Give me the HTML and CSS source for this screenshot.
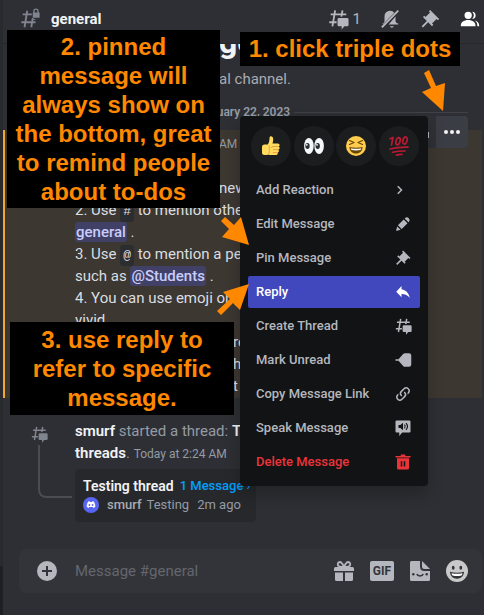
FILE: index.html
```html
<!DOCTYPE html>
<html lang="en">
<head>
<meta charset="utf-8">
<meta name="viewport" content="width=device-width, initial-scale=1">
<title>general</title>
<link rel="stylesheet" href="styles.css">
</head>
<body>
<svg class="defs" aria-hidden="true">
  <symbol id="pin" viewBox="0 0 24 24"><path fill="currentColor" d="M22 12 12.1 2.1l-1.4 1.4 1.4 1.4-4.95 4.95-1.4-1.4L4.3 9.9l4.25 4.2-5.65 5.7 1.4 1.4L10 15.5l4.2 4.3 1.4-1.4-1.4-1.45L19.2 12l1.4 1.4z"/></symbol>
  <symbol id="thread" viewBox="0 0 24 24"><path fill="none" stroke="currentColor" stroke-width="2" d="M8.9 2.5 5.9 20M16.9 2.5l-1.2 7M4 7h17M2.5 15.5h8"/><path fill="currentColor" d="M13 11h9a1.5 1.5 0 0 1 1.500 1.500v6a1.500 1.500 0 0 1-1.500 1.500h-3l-3 3.500V20h-3a1.500 1.500 0 0 1-1.500-1.500v-6A1.500 1.500 0 0 1 13 11z"/></symbol>
</svg>

<div class="app">
  <aside class="rail"><div class="rail-top"></div></aside>
  <main class="channel">
    <header class="topbar">
      <svg class="icon-22 hash" viewBox="0 0 24 24"><path fill="none" stroke="currentColor" stroke-width="2" d="M9 3 6 21M15 11l-1.600 10M4 7h10M18 15.500H2.500M17 12l-.2 1"/><path fill="currentColor" d="M21.500 5V3.500a3 3 0 0 0-6 0V5H15v5.500h7.500V5zM17 5V3.500a1.500 1.500 0 0 1 3 0V5z"/></svg>
      <h1 class="title">general</h1>
      <nav class="tools">
        <button class="tool" aria-label="Threads"><svg class="icon-22"><use href="#thread"/></svg><span class="count">1</span></button>
        <button class="tool" aria-label="Notifications"><svg class="icon-22" viewBox="0 0 24 24"><path fill="currentColor" d="M18 9v5c0 1.700 1.300 3 3 3v1H10.500L18.200 9zM11.800 20h4.400a2.300 2.300 0 0 1-4.400 0zM12 3a6 6 0 0 1 4.700 2.200L5 17.100H3.500V17c1.600 0 2.500-1.300 2.500-3V9a6 6 0 0 1 6-6z"/><path stroke="currentColor" stroke-width="2" d="M21 2.800 3.200 21"/></svg></button>
        <button class="tool" aria-label="Pinned Messages"><svg class="icon-22"><use href="#pin"/></svg></button>
        <button class="tool active" aria-label="Members"><svg class="icon-22" viewBox="0 0 24 24"><path fill="currentColor" d="M14 8a4 4 0 1 1-8 0 4 4 0 0 1 8 0zM2 19c0-3.500 3.300-6 8-6s8 2.500 8 6v1H2zM20 20h2v-1c0-2.600-1.700-4.600-4.500-5.500A7.400 7.400 0 0 1 20 19zM14.900 11.900A4 4 0 0 0 14.500 4a6 6 0 0 1 .1 7.800z"/></svg></button>
      </nav>
    </header>

    <section class="chat">
      <div class="intro">
        <h2>ge</h2>
        <p>al channel.</p>
      </div>
      <div class="divider"><span>January 22, 2023</span></div>

      <article class="message mention">
        <div class="inset"><time>AM</time></div>
        <p class="inset line-gap">new</p>
        <p>2. Use <code>#</code> to mention othe</p>
        <p><a class="tag" href="#">general</a> .</p>
        <p>3. Use <code>@</code> to mention a pe</p>
        <p>such as <a class="tag" href="#">@Students</a> .</p>
        <p>4. You can use emoji or g</p>
        <p>vivid.</p>
        <p class="inset-far">re</p>
        <p class="inset-far">h</p>
        <p class="inset-far">t</p>
      </article>

      <article class="message system">
        <div class="gutter">
          <svg class="icon-18"><use href="#thread"/></svg>
          <span class="spine"></span>
        </div>
        <div class="body">
          <p><b>smurf</b> started a thread: <b>T</b></p>
          <p><b>threads</b>. <time>Today at 2:24 AM</time></p>
          <div class="thread-card">
            <div class="thread-title"><b>Testing thread</b><a href="#">1 Message ›</a></div>
            <div class="thread-last">
              <svg class="avatar" viewBox="0 0 16 16"><circle cx="8" cy="8" r="8" fill="#5865f2"/><path fill="#fff" d="M5.200 4.600 6.600 4.200l.4.700h2l.4-.7 1.400.4c1 1.500 1.600 3.100 1.500 5.200-.6.600-1.300.9-2 1.100l-.5-.9H6.200l-.5.9c-.7-.2-1.400-.5-2-1.100-.1-2.100.5-3.700 1.500-5.200z"/><circle cx="6.400" cy="8" r=".9" fill="#5865f2"/><circle cx="9.600" cy="8" r=".9" fill="#5865f2"/></svg>
              <span class="who">smurf</span><span>Testing</span><span class="ago">2m ago</span>
            </div>
          </div>
        </div>
      </article>
    </section>

    <form class="composer">
      <button type="button" aria-label="Add attachment"><svg class="icon-20" viewBox="0 0 20 20"><circle cx="10" cy="10" r="10" fill="currentColor"/><path stroke="#333439" stroke-width="2" d="M10 5v10M5 10h10"/></svg></button>
      <input type="text" aria-label="Message" placeholder="Message #general">
      <button type="button" aria-label="Send a gift"><svg class="icon-20" viewBox="0 0 20 20"><path fill="currentColor" d="M0 7.500Q0 6 1.500 6h17Q20 6 20 7.500V10H0zM1 11.500h8V20H2.500Q1 20 1 18.500zM11 11.500h8v7q0 1.500-1.500 1.500H11z"/><path fill="none" stroke="currentColor" stroke-width="1.800" d="M10 6C8.500 2.500 7.500 1 5.800 1a2.200 2.200 0 0 0-.8 4.200C6.500 6 8 6 10 6c2 0 3.500 0 5-.8A2.200 2.200 0 0 0 14.200 1C12.500 1 11.500 2.500 10 6z"/></svg></button>
      <button type="button" class="gif">GIF</button>
      <button type="button" aria-label="Stickers"><svg class="icon-20" viewBox="0 0 20 20"><path fill="currentColor" d="M1.500 0H10v5.500Q10 10 14.500 10H20v8.500q0 1.500-1.500 1.500h-17Q0 20 0 18.500v-17Q0 0 1.500 0z"/><path fill="currentColor" d="M12 0 20 8h-5.500Q12 8 12 5.500z"/><g fill="#333439"><circle cx="3.300" cy="13.300" r="1.200"/><circle cx="16.700" cy="13.300" r="1.200"/></g><path fill="none" stroke="#333439" stroke-width="1.500" d="M6.800 13c.8 2.600 5.600 2.600 6.400 0"/></svg></button>
      <button type="button" class="smile" aria-label="Emoji"><svg class="icon-22" viewBox="0 0 22 22"><circle cx="11" cy="11" r="11" fill="currentColor"/><g fill="#333439"><ellipse cx="7.200" cy="7.800" rx="1.400" ry="2"/><ellipse cx="14.800" cy="7.800" rx="1.400" ry="2"/><path d="M4 11.800q7 1.700 14 0c-.2 4.700-3.400 6.900-7 6.900s-6.800-2.200-7-6.900z"/></g><path fill="#fff" d="M5.500 13.300q5.500 1.100 11 0-.3 1.700-1 2.200-4.500 1-9 0-.7-.5-1-2.200z"/></svg></button>
    </form>
  </main>
</div>

<div class="hover-bar">
  <button class="partial" aria-label="Reply"><svg viewBox="0 0 4 8"><path fill="currentColor" d="M0 1h3v6H0z"/></svg></button>
  <button class="more" aria-label="More"><svg viewBox="0 0 18 6"><g fill="currentColor"><circle cx="3" cy="3" r="2"/><circle cx="9" cy="3" r="2"/><circle cx="15" cy="3" r="2"/></g></svg></button>
</div>

<div class="menu">
  <div class="reactions">
    <button aria-label="Thumbs up"><svg viewBox="0 0 20 20"><path fill="#ffdb5e" d="M6 9C8 8 8.500 4.500 8.500 2c0-2.600 3.700-2.300 3.700 1 0 1.800-.3 3.300-.7 4.500h5.200c2.200 0 2.500 2.600.8 3 1.700.7 1.500 2.800-.3 3.200 1.200.8.8 2.600-.7 2.900.8 1-.1 2.400-1.500 2.400H8.500L6 18z"/><rect x="1" y="8.500" width="7" height="10.500" rx="2.500" fill="#ffdb5e"/><path fill="none" stroke="#ee9547" stroke-width=".9" d="M17.500 10.500h-5.500q-1.500 0-1.500 1.500M17 13.700h-5M16.300 16.600h-4.500M8 9.500c.5 2 .5 6 0 8.500"/></svg></button>
    <button aria-label="Eyes"><svg viewBox="0 0 20 20"><g fill="#f5f8fa"><ellipse cx="4.900" cy="10" rx="4.800" ry="8"/><ellipse cx="15.100" cy="10" rx="4.800" ry="8"/></g><g fill="#292f33"><ellipse cx="3.500" cy="10" rx="2.200" ry="3"/><ellipse cx="13.700" cy="10" rx="2.200" ry="3"/></g><g fill="#fff"><circle cx="2.800" cy="8.800" r=".9"/><circle cx="13" cy="8.800" r=".9"/></g></svg></button>
    <button aria-label="Laughing"><svg viewBox="0 0 20 20"><circle cx="10" cy="10" r="10" fill="#ffcc4d"/><path fill="#664500" d="M3.500 11q6.500 1.500 13 0c0 4-2.700 6.500-6.500 6.500S3.500 15 3.500 11z"/><path fill="#fff" d="M4.700 12.200q5.300 1.100 10.600 0-.2 1.200-.9 1.900-4.400.9-8.800 0-.7-.7-.9-1.900z"/><path fill="none" stroke="#664500" stroke-width="1.200" stroke-linecap="round" stroke-linejoin="round" d="m3.500 4.500 4.500 2-4.500 2M16.500 4.500 12 6.500l4.500 2"/></svg></button>
    <button aria-label="Hundred"><svg viewBox="0 0 20 20"><g fill="none" stroke="#bb1a34" stroke-width="1.700" stroke-linecap="round" stroke-linejoin="round"><path d="M1.200 2.800 4 1.500 2.500 9M1 13q8-2.200 18-1.900M3.500 16.300q5-1.300 12.500-1.300M7.500 19.100q3-.9 5.500-.8"/><ellipse cx="9" cy="5.200" rx="2" ry="3.700" transform="rotate(16 9 5.200)"/><ellipse cx="16" cy="4.500" rx="2" ry="3.700" transform="rotate(16 16 4.500)"/></g></svg></button>
  </div>
  <button class="item">Add Reaction<svg class="icon-18" viewBox="0 0 24 24"><path fill="none" stroke="currentColor" stroke-width="2" d="m5 7 5 5-5 5"/></svg></button>
  <button class="item">Edit Message<svg class="icon-18" viewBox="0 0 24 24"><path fill="currentColor" d="m19.300 9.800.6-.6a3.620 3.620 0 0 0-5.100-5.100l-.6.600zM12.900 6l-7.700 7.700 5.100 5.100L18 11.100zM4.100 21l4.700-1.200-4.600-4.600L3 19.900a.9.900 0 0 0 1.100 1.100z"/></svg></button>
  <button class="item">Pin Message<svg class="icon-18"><use href="#pin"/></svg></button>
  <button class="item selected">Reply<svg class="icon-18" viewBox="0 0 24 24"><path fill="currentColor" d="M10 8.300V4l-7 7.500 7 7.400v-4.300c5 0 8.500 1.700 11 5.400-1-5.300-4-10.700-11-11.700z"/></svg></button>
  <button class="item">Create Thread<svg class="icon-18"><use href="#thread"/></svg></button>
  <button class="item">Mark Unread<svg class="icon-18" viewBox="0 0 24 24"><path fill="currentColor" d="M2 11h4l6.500-7.200Q13.500 3 14.500 3H20q3 0 3 3v12q0 3-3 3h-5.500q-1 0-2-.8L6 13H2z"/></svg></button>
  <button class="item">Copy Message Link<svg class="icon-18" viewBox="0 0 24 24"><path fill="currentColor" d="M10.590 13.410c.41.39.41 1.030 0 1.420-.39.39-1.030.39-1.420 0a5.003 5.003 0 0 1 0-7.070l3.540-3.540a5.003 5.003 0 0 1 7.070 7.070l-1.490 1.490c.01-.82-.12-1.640-.4-2.420l.47-.48a2.982 2.982 0 0 0-4.240-4.240l-3.530 3.530a2.982 2.982 0 0 0 0 4.240zm2.820-4.240c.39-.39 1.030-.39 1.420 0a5.003 5.003 0 0 1 0 7.070l-3.540 3.540a5.003 5.003 0 0 1-7.070-7.070l1.490-1.490c-.01.82.12 1.640.4 2.430l-.47.47a2.982 2.982 0 0 0 4.240 4.240l3.530-3.530a2.982 2.982 0 0 0 0-4.240.973.973 0 0 1 0-1.420z"/></svg></button>
  <button class="item">Speak Message<svg class="icon-18" viewBox="0 0 24 24"><path fill="currentColor" d="M3.500 2h17Q22 2 22 3.500v13q0 1.500-1.500 1.500H11l-4 4.500V18H3.500Q2 18 2 16.500v-13Q2 2 3.500 2z"/><path fill="#121315" d="M6 8h2.500L12 5v10l-3.500-3H6z"/><path fill="none" stroke="#121315" stroke-width="1.500" d="M14 7.500q2 2.500 0 5M16 5.500q4 4.500 0 9"/></svg></button>
  <button class="item danger">Delete Message<svg class="icon-18" viewBox="0 0 24 24"><path fill="currentColor" d="M15 4V2H9v2H2v2h20V4zM4 7v13q0 2 2 2h12q2 0 2-2V7zm7 11H9v-7h2zm4 0h-2v-7h2z"/></svg></button>
</div>

<div class="note note-pinned">2. pinned<br>message will<br>always show on<br>the bottom, great<br>to remind people<br>about to-dos</div>
<div class="note note-dots">1. click triple dots</div>
<div class="note note-reply">3. use reply to<br>refer to specific<br>message.</div>

<svg class="arrow arrow-dots" viewBox="0 0 24 42"><path d="m3 4 5-3 7 16 9-3-2 28L1 23l9-4z"/></svg>
<svg class="arrow arrow-pin" viewBox="0 0 28 28"><path d="m0 4 4-4 9 8 7-8 8 28-27-8 7-8z"/></svg>
<svg class="arrow arrow-reply" viewBox="0 0 32 32"><path d="M32 0 6 8l7 7L0 27l4 4 12-12 7 7z"/></svg>
</body>
</html>
```
FILE: styles.css
```css
* { box-sizing: border-box; margin: 0; padding: 0; }

body {
  position: relative;
  height: 100vh;
  overflow: hidden;
  background: #2e2f34;
  color: #dbdee1;
  font-family: Roboto, "Noto Sans", sans-serif;
  font-size: 15px;
  line-height: 22px;
}

button, input { border: 0; background: none; color: inherit; font: inherit; }
a { text-decoration: none; }
svg { display: block; flex: none; }
b { font-weight: 600; color: #f2f3f5; }

.defs { position: absolute; width: 0; height: 0; }
.icon-18 { width: 18px; height: 18px; }
.icon-20 { width: 20px; height: 20px; }
.icon-22 { width: 22px; height: 22px; }

.app { display: flex; height: 100%; }
.rail { width: 3px; background: #1f2023; }
.rail-top { height: 92%; background: #292a2e; }
.channel { flex: 1; min-width: 0; display: flex; flex-direction: column; }

.topbar {
  display: flex;
  align-items: center;
  flex: none;
  height: 44px;
  padding: 0 3px 6px 16px;
  border-bottom: 1px solid #26272b;
}
.hash { color: #80848e; }
.title { margin-left: 10px; font-size: 15px; font-weight: 700; color: #f2f3f5; }
.tools { display: flex; gap: 18px; margin-left: auto; color: #b5b7be; }
.tool { display: flex; align-items: center; }
.tool.active { color: #fff; }
.count { margin-left: 4px; }

.chat {
  flex: 1;
  min-height: 0;
  display: flex;
  flex-direction: column;
  justify-content: flex-end;
  overflow: hidden;
  padding-bottom: 27px;
}
.intro { flex: none; padding-left: 216px; color: #a9abb1; }
.intro h2 { font-size: 32px; line-height: 40px; color: #f2f3f5; margin-bottom: 6px; }

.divider {
  flex: none;
  display: flex;
  align-items: center;
  gap: 4px;
  margin: 14px 16px 10px;
  font-size: 12px;
  font-weight: 600;
  line-height: 16px;
  color: #949ba4;
}
.divider::before, .divider::after { content: ""; flex: 1; height: 1px; background: #3f4147; }

.message { flex: none; white-space: nowrap; }
.mention {
  overflow: hidden;
  margin-right: 2px;
  padding: 2px 0 1px 70px;
  border-left: 2px solid #f0a832;
  background: #3c3731;
}
.inset { padding-left: 144px; }
.inset-far { padding-left: 158px; }
.line-gap { margin-top: 22px; }
time { font-size: 12px; color: #949ba4; }
code {
  padding: 3px;
  border-radius: 3px;
  background: #2b2d31;
  font-family: "Liberation Mono", monospace;
  font-size: 13px;
  line-height: 16px;
}
.tag { padding: 1px; border-radius: 3px; background: #414067; color: #c9cdfb; font-weight: 500; }

.system { display: flex; margin-top: 22px; }
.gutter { display: flex; flex-direction: column; width: 72px; padding: 5px 0 24px 27px; color: #80848e; }
.spine {
  flex: 1;
  margin: 2px 3px 0 8px;
  border: solid #4a4c52;
  border-width: 0 0 2px 2px;
  border-radius: 0 0 0 8px;
}
.body { color: #949ba4; }
.thread-card {
  width: 181px;
  margin-top: 4px;
  padding: 8px;
  border-radius: 4px;
  background: #27282c;
  font-size: 13px;
  line-height: 18px;
}
.thread-title { display: flex; gap: 6px; }
.thread-title b { font-size: 14px; }
.thread-title a { color: #00a0fc; font-weight: 500; }
.thread-last { display: flex; align-items: center; gap: 5px; margin-top: 1px; }
.avatar { width: 16px; height: 16px; margin-right: 3px; }
.who { color: #a9abb1; font-weight: 500; }
.ago { margin-left: 3px; }

.composer {
  flex: none;
  display: flex;
  align-items: center;
  gap: 16px;
  height: 44px;
  margin: 0 2px 22px 16px;
  padding: 0 14px 0 18px;
  border-radius: 8px;
  background: #333439;
  color: #b5b7be;
}
.composer input { flex: 1; min-width: 0; padding-left: 2px; outline: none; }
.composer input::placeholder { color: #64666e; opacity: 1; }
.gif {
  width: 24px;
  height: 20px;
  border-radius: 2px;
  background: #b5b7be;
  color: #333439;
  font-size: 12px;
  font-weight: 700;
  line-height: 20px;
}
.smile { color: #c9c9c9; }

.hover-bar {
  position: absolute;
  top: 116px;
  right: 16px;
  display: flex;
  height: 32px;
  border-radius: 4px;
  overflow: hidden;
  background: #303136;
  color: #b5bac1;
}
.partial { width: 10px; }
.partial svg { width: 4px; height: 8px; margin-top: 6px; }
.more { width: 32px; background: #3b3d44; color: #f2f3f5; }
.more svg { width: 18px; margin: 0 auto; }

.menu {
  position: absolute;
  top: 116px;
  left: 240px;
  width: 188px;
  padding: 10px 8px 8px;
  border-radius: 4px;
  background: #121315;
  box-shadow: 0 8px 16px rgba(0, 0, 0, .24);
  color: #b5b7be;
  display: flex;
  flex-direction: column;
  gap: 2px;
}
.reactions { display: flex; justify-content: space-between; margin: 0 1px 6px 3px; }
.reactions button {
  width: 40px;
  height: 40px;
  border-radius: 50%;
  background: #1c1d1f;
  display: flex;
  align-items: center;
  justify-content: center;
}
.reactions svg { width: 20px; height: 20px; }
.item {
  display: flex;
  align-items: center;
  justify-content: space-between;
  height: 32px;
  padding: 0 8px;
  border-radius: 2px;
  font-size: 13px;
  font-weight: 500;
  text-align: left;
}
.selected { background: #4147bd; color: #fff; }
.danger { color: #eb3439; }

.note {
  position: absolute;
  background: #000;
  color: #ff8800;
  font-family: "Liberation Sans", Arial, sans-serif;
  font-size: 24px;
  font-weight: 700;
  line-height: 29px;
  text-align: center;
  white-space: nowrap;
}
.note-pinned { top: 30px; left: 7px; width: 213px; padding: 2px 0; }
.note-dots { top: 32px; left: 240px; width: 220px; padding: 2px 0 3px; }
.note-reply { top: 322px; left: 10px; width: 224px; padding: 3px 0; }

.arrow { position: absolute; fill: #ff8800; }
.arrow-dots { top: 69px; left: 421px; width: 24px; height: 42px; }
.arrow-pin { top: 217px; left: 221px; width: 28px; height: 28px; }
.arrow-reply { top: 284px; left: 217px; width: 32px; height: 32px; }
```
